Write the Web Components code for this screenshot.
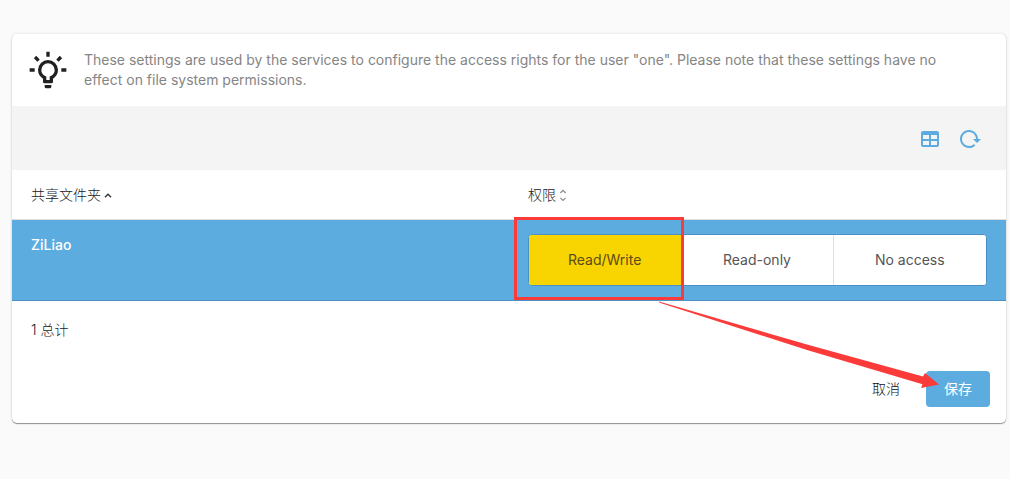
<!DOCTYPE html>
<html lang="zh-CN">
<head>
<meta charset="utf-8">
<meta name="viewport" content="width=device-width, initial-scale=1">
<title>共享文件夹权限</title>
<style>
  html { background: #fafafa; }
  body {
    margin: 0;
    padding: 34px 4px 56px 12px;
    font: 300 14px/20px Inter, "Noto Sans CJK SC", sans-serif;
    color: #212121;
    --accent: #5dacdf;
    --accent-dark: #4a92c6;
  }
</style>
</head>
<body>
<permissions-card>
  <info-banner>These settings are used by the services to configure the access rights for the user "one". Please note that these settings have no effect on file system permissions.</info-banner>
  <table-toolbar></table-toolbar>
  <privilege-table folder="ZiLiao"></privilege-table>
  <form-actions></form-actions>
  <click-guide slot="overlay"></click-guide>
</permissions-card>

<script>
  function define(name, markup, setup) {
    const template = document.createElement('template');
    template.innerHTML = markup;
    customElements.define(name, class extends HTMLElement {
      constructor() {
        super();
        this.attachShadow({ mode: 'open' }).append(template.content.cloneNode(true));
      }
      connectedCallback() {
        if (setup) setup(this, this.shadowRoot);
      }
    });
  }

  define('permissions-card', `
    <style>
      :host {
        display: block;
        position: relative;
        background: #fff;
        border-radius: 5px;
        box-shadow: 0 1px 1px rgba(0,0,0,.4), 0 0 3px rgba(0,0,0,.12);
      }
    </style>
    <slot></slot><slot name="overlay"></slot>`);

  define('info-banner', `
    <style>
      :host { display: flex; align-items: center; gap: 16px; padding: 16px; color: #858585; }
      svg { flex: none; width: 40px; height: 40px; fill: #212121; }
      p { margin: 0; padding-right: 32px; font-weight: 400; }
    </style>
    <svg viewBox="0 0 24 24" aria-hidden="true"><path d="M20,11H23V13H20V11M1,11H4V13H1V11M13,1V4H11V1H13M4.92,3.5L7.05,5.64L5.63,7.05L3.5,4.93L4.92,3.5M16.95,5.63L19.07,3.5L20.5,4.93L18.37,7.05L16.95,5.63M12,6A6,6 0 0,1 18,12C18,14.22 16.79,16.16 15,17.2V19A1,1 0 0,1 14,20H10A1,1 0 0,1 9,19V17.2C7.21,16.16 6,14.22 6,12A6,6 0 0,1 12,6M14,21V22A1,1 0 0,1 13,23H11A1,1 0 0,1 10,22V21H14M11,18H13V15.87C14.73,15.43 16,13.86 16,12A4,4 0 0,0 12,8A4,4 0 0,0 8,12C8,13.86 9.27,15.43 11,15.87V18Z"/></svg>
    <p><slot></slot></p>`);

  define('table-toolbar', `
    <style>
      :host { display: flex; justify-content: flex-end; padding: 13px 16px 11px; background: #f4f4f4; }
      button {
        display: grid; place-items: center; width: 40px; height: 40px;
        padding: 0; border: 0; border-radius: 50%; background: none; cursor: pointer;
      }
      svg { width: 24px; height: 24px; fill: var(--accent); }
    </style>
    <button type="button" aria-label="Columns"><svg viewBox="0 0 24 24"><path d="M5,4H19A2,2 0 0,1 21,6V18A2,2 0 0,1 19,20H5A2,2 0 0,1 3,18V6A2,2 0 0,1 5,4M5,8V12H11V8H5M13,8V12H19V8H13M5,14V18H11V14H5M13,14V18H19V14H13Z"/></svg></button>
    <button type="button" aria-label="Reload"><svg viewBox="0 0 24 24"><path d="M2 12C2 16.97 6.03 21 11 21C13.39 21 15.68 20.06 17.4 18.4L15.9 16.9C14.63 18.25 12.86 19 11 19C4.76 19 1.64 11.46 6.05 7.05C10.46 2.64 18 5.77 18 12H15L19 16H19.1L23 12H20C20 7.03 15.97 3 11 3C6.03 3 2 7.03 2 12Z"/></svg></button>`);

  define('access-toggle', `
    <style>
      :host {
        display: grid; grid-template-columns: repeat(3, 1fr);
        border: 1px solid var(--accent-dark); border-radius: 4px;
        background: #fff; overflow: hidden; font-weight: 400;
      }
      button {
        height: 50px; padding: 0; border: 0; border-right: 1px solid #e0e0e0;
        background: #fff; color: #555; font: inherit; cursor: pointer;
      }
      button:last-of-type { border-right: 0; }
      button[aria-pressed="true"] { background: #f8d500; border-color: #f8d500; color: #5f4a1c; }
    </style>
    <button type="button" aria-pressed="true">Read/Write</button>
    <button type="button" aria-pressed="false">Read-only</button>
    <button type="button" aria-pressed="false">No access</button>`,
    (host, root) => {
      const buttons = [...root.querySelectorAll('button')];
      buttons.forEach(button => button.addEventListener('click', () =>
        buttons.forEach(b => b.setAttribute('aria-pressed', String(b === button)))));
    });

  define('privilege-table', `
    <style>
      :host { display: block; }
      table { width: 100%; border-collapse: separate; border-spacing: 0; table-layout: fixed; }
      th, td { padding: 14px 19px; text-align: left; vertical-align: top; }
      th, tbody td:first-child { padding-top: 15px; }
      th { border-bottom: 1px solid #dedede; font-weight: 300; color: #212121; }
      th div { display: flex; align-items: center; gap: 3px; }
      tbody td { background: var(--accent); border-bottom: 1px solid var(--accent-dark); color: #fff; }
      tbody td:first-child { font-weight: 500; }
      svg { fill: none; stroke: #333; stroke-width: 1.4; }
      svg.both { stroke: #8a8a8a; stroke-width: 1.2; }
      footer { padding: 19px; }
    </style>
    <table>
      <thead><tr>
        <th scope="col" aria-sort="ascending"><div>共享文件夹<svg width="8" height="12" viewBox="0 0 8 12" aria-hidden="true"><path d="M1 8.2 4 5.2 7 8.2"/></svg></div></th>
        <th scope="col"><div>权限<svg class="both" width="8" height="12" viewBox="0 0 8 12" aria-hidden="true"><path d="M1.4 4 4 1.4 6.6 4M1.4 8.8 4 11.4 6.6 8.8"/></svg></div></th>
      </tr></thead>
      <tbody><tr><td></td><td><access-toggle></access-toggle></td></tr></tbody>
    </table>
    <footer>1 总计</footer>`,
    (host, root) => {
      root.querySelector('td').textContent = host.getAttribute('folder');
    });

  define('form-actions', `
    <style>
      :host { display: flex; justify-content: flex-end; gap: 8px; padding: 12px 16px 16px; }
      button {
        height: 36px; padding: 0 18px; border: 0; border-radius: 4px;
        background: none; color: #111; font: inherit; cursor: pointer;
      }
      .primary { background: var(--accent); color: #fff; font-weight: 400; }
    </style>
    <button type="button">取消</button>
    <button type="submit" class="primary">保存</button>`);

  /* Tutorial callout floating above the card: frame around the choice, arrow to the save button. */
  define('click-guide', `
    <style>
      :host { position: absolute; right: 62px; bottom: 34px; pointer-events: none; }
      svg { display: block; }
    </style>
    <svg width="432" height="174" viewBox="0 0 432 174" aria-hidden="true">
      <rect x="3.5" y="3.5" width="167" height="80" fill="none" stroke="#fb3a3a" stroke-width="3"/>
      <path d="M147 86.6 295 129.4 411 161.6 413 158 427 169.5 409 173 410.5 169.3 295 135 147 87.6Z" fill="#fb3a3a"/>
    </svg>`);
</script>
</body>
</html>
